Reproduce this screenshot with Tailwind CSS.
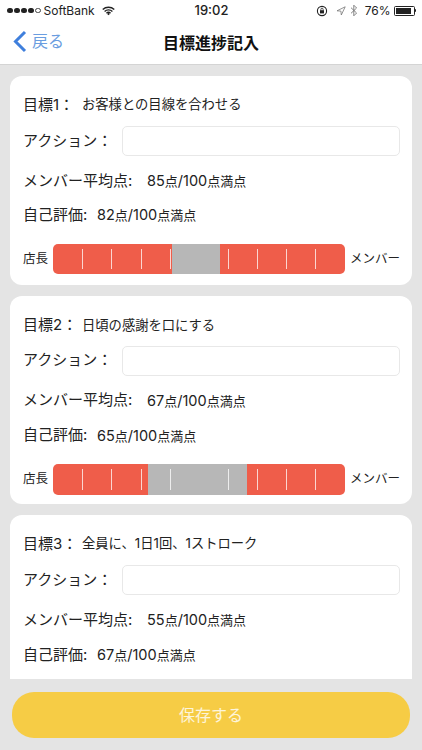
<!doctype html>
<html lang="ja">
<head>
<meta charset="UTF-8" />
<meta name="viewport" content="width=device-width, initial-scale=1" />
<title>目標進捗記入</title>
<script src="https://cdn.jsdelivr.net/npm/@tailwindcss/browser@4"></script>
</head>
<body class="relative h-[750px] w-[422px] overflow-hidden bg-[#e4e4e4] text-[#222] font-['Inter','Noto_Sans_CJK_JP',sans-serif]">
  <!-- status bar -->
  <div class="flex h-[21px] items-center justify-between bg-white pl-[7px] pr-[6px] text-[12px] text-[#222]">
    <div class="flex w-[150px] items-center">
      <div class="flex gap-[1.5px]">
        <span class="size-[5.5px] rounded-full bg-[#222]"></span>
        <span class="size-[5.5px] rounded-full bg-[#222]"></span>
        <span class="size-[5.5px] rounded-full bg-[#222]"></span>
        <span class="size-[5.5px] rounded-full bg-[#222]"></span>
        <span class="size-[5.5px] rounded-full border border-[#444]"></span>
      </div>
      <span class="ml-[3px]">SoftBank</span>
      <svg class="ml-[7px]" width="13" height="10" viewBox="0 0 14 10" fill="none" stroke="#222" stroke-width="1.5"><path d="M.8 3.4a9 9 0 0 1 12.4 0M2.8 5.5a6.1 6.1 0 0 1 8.4 0M4.8 7.4a3.2 3.2 0 0 1 4.4 0"/><path d="M5.6 8.2 7 6.9l1.4 1.3L7 9.7z" fill="#222" stroke="none"/></svg>
    </div>
    <span class="text-[13px] font-medium">19:02</span>
    <div class="flex w-[150px] items-center justify-end">
      <svg width="12" height="12" viewBox="0 0 12 12" fill="none" stroke="#222"><circle cx="6" cy="6" r="4.6" stroke-width="1.1"/><rect x="4" y="5.2" width="4" height="3.2" fill="#222" stroke="none"/><path d="M4.9 5.2V4.3a1.1 1.1 0 0 1 2.2 0v.9" stroke-width=".8"/></svg>
      <svg class="ml-[8px]" width="10" height="10" viewBox="0 0 10 10" fill="none" stroke="#777" stroke-width=".8"><path d="M9.2.8 1 4.8l3.9.3.4 3.9z"/></svg>
      <svg class="ml-[4px]" width="8" height="13" viewBox="0 0 8 13" fill="none" stroke="#777" stroke-width=".9"><path d="M1 3.7 6.6 9 3.8 11.8V1.2L6.6 4 1 9.3"/></svg>
      <span class="ml-[7px]">76%</span>
      <div class="ml-[3px] flex h-[10px] w-[21px] items-stretch rounded-[1.5px] border border-[#222] p-[1px]"><div class="w-[15px] bg-[#222]"></div></div>
      <div class="h-[3px] w-[1.5px] rounded-r-full bg-[#222]"></div>
    </div>
  </div>
  <!-- nav -->
  <div class="relative flex h-[44px] items-center justify-center border-b border-[#d4d4d4] bg-white">
    <div class="absolute left-[13px] top-[8px] flex items-center text-[#6a9de0]">
      <svg width="14" height="23" viewBox="0 0 14 23" fill="none" stroke="#3f7fdc" stroke-width="3"><path d="M12 2 2.5 11.5 12 21"/></svg>
      <span class="ml-[5px] text-[16px]">戻る</span>
    </div>
    <h1 class="text-[16px] font-bold text-[#111]">目標進捗記入</h1>
  </div>
  <!-- cards -->
  <div class="flex flex-col gap-[11px] px-[10px] pt-[11px]">
    <section class="h-[208.5px] shrink-0 rounded-[12px] bg-white pl-[13px] pr-[12px] pt-[17px]">
      <div class="flex h-[24px] items-center text-[15px]"><span class="w-[59px]">目標1：</span><span class="text-[13.3px]">お客様との目線を合わせる</span></div>
      <div class="mt-[9px] flex h-[30px] items-center text-[15px]"><span class="w-[99px]">アクション：</span><input type="text" aria-label="アクション" class="h-full flex-1 rounded-[5px] border border-[#e8e8e8] bg-white" /></div>
      <div class="mt-[13px] flex h-[24px] items-center text-[15px]"><span class="w-[124px]">メンバー平均点:</span><span class="text-[14.5px]">85<span class="text-[13px]">点</span>/100<span class="text-[13px]">点満点</span></span></div>
      <div class="mt-[10px] flex h-[24px] items-center text-[15px]"><span class="w-[74px]">自己評価:</span><span class="text-[14.5px]">82<span class="text-[13px]">点</span>/100<span class="text-[13px]">点満点</span></span></div>
      <div class="mt-[17px] flex h-[30px] items-center text-[12.5px]">
        <span class="w-[30px] shrink-0">店長</span>
        <div class="relative h-full w-[292px] shrink-0 overflow-hidden rounded-[5px] bg-[#ef5d4a]">
          <div class="absolute left-[119px] top-0 h-full w-[48px] bg-[#b7b7b7]"></div>
          <div class="absolute inset-y-[5px] left-0 right-0 flex">
            <i class="absolute left-[29px] h-full w-[1px] bg-white/75"></i>
            <i class="absolute left-[58px] h-full w-[1px] bg-white/75"></i>
            <i class="absolute left-[88px] h-full w-[1px] bg-white/75"></i>
            <i class="absolute left-[117px] h-full w-[1px] bg-white/75"></i>
            <i class="absolute left-[175px] h-full w-[1px] bg-white/75"></i>
            <i class="absolute left-[204px] h-full w-[1px] bg-white/75"></i>
            <i class="absolute left-[233px] h-full w-[1px] bg-white/75"></i>
            <i class="absolute left-[262px] h-full w-[1px] bg-white/75"></i>
          </div>
        </div>
        <span class="ml-[5px] whitespace-nowrap">メンバー</span>
      </div>
    </section>

    <section class="h-[208.5px] shrink-0 rounded-[12px] bg-white pl-[13px] pr-[12px] pt-[18px]">
      <div class="flex h-[24px] items-center text-[15px]"><span class="w-[59px]">目標2：</span><span class="text-[13.3px]">日頃の感謝を口にする</span></div>
      <div class="mt-[8px] flex h-[30px] items-center text-[15px]"><span class="w-[99px]">アクション：</span><input type="text" aria-label="アクション" class="h-full flex-1 rounded-[5px] border border-[#e8e8e8] bg-white" /></div>
      <div class="mt-[13px] flex h-[24px] items-center text-[15px]"><span class="w-[124px]">メンバー平均点:</span><span class="text-[14.5px]">67<span class="text-[13px]">点</span>/100<span class="text-[13px]">点満点</span></span></div>
      <div class="mt-[11px] flex h-[24px] items-center text-[15px]"><span class="w-[74px]">自己評価:</span><span class="text-[14.5px]">65<span class="text-[13px]">点</span>/100<span class="text-[13px]">点満点</span></span></div>
      <div class="mt-[16px] flex h-[31px] items-center text-[12.5px]">
        <span class="w-[30px] shrink-0">店長</span>
        <div class="relative h-full w-[292px] shrink-0 overflow-hidden rounded-[5px] bg-[#ef5d4a]">
          <div class="absolute left-[95px] top-0 h-full w-[99px] bg-[#b7b7b7]"></div>
          <div class="absolute inset-y-[5px] left-0 right-0 flex">
            <i class="absolute left-[29px] h-full w-[1px] bg-white/75"></i>
            <i class="absolute left-[58px] h-full w-[1px] bg-white/75"></i>
            <i class="absolute left-[88px] h-full w-[1px] bg-white/75"></i>
            <i class="absolute left-[117px] h-full w-[1px] bg-white/75"></i>
            <i class="absolute left-[175px] h-full w-[1px] bg-white/75"></i>
            <i class="absolute left-[204px] h-full w-[1px] bg-white/75"></i>
            <i class="absolute left-[233px] h-full w-[1px] bg-white/75"></i>
            <i class="absolute left-[262px] h-full w-[1px] bg-white/75"></i>
          </div>
        </div>
        <span class="ml-[5px] whitespace-nowrap">メンバー</span>
      </div>
    </section>

    <section class="h-[208.5px] shrink-0 rounded-[12px] bg-white pl-[13px] pr-[12px] pt-[17px]">
      <div class="flex h-[24px] items-center text-[15px]"><span class="w-[59px]">目標3：</span><span class="text-[13.3px]">全員に、1日1回、1ストローク</span></div>
      <div class="mt-[9px] flex h-[30px] items-center text-[15px]"><span class="w-[99px]">アクション：</span><input type="text" aria-label="アクション" class="h-full flex-1 rounded-[5px] border border-[#e8e8e8] bg-white" /></div>
      <div class="mt-[13px] flex h-[24px] items-center text-[15px]"><span class="w-[124px]">メンバー平均点:</span><span class="text-[14.5px]">55<span class="text-[13px]">点</span>/100<span class="text-[13px]">点満点</span></span></div>
      <div class="mt-[11px] flex h-[24px] items-center text-[15px]"><span class="w-[74px]">自己評価:</span><span class="text-[14.5px]">67<span class="text-[13px]">点</span>/100<span class="text-[13px]">点満点</span></span></div>
    </section>
  </div>
  <!-- save button over the list -->
  <div class="absolute inset-x-0 bottom-0 h-[71px] bg-[#e4e4e4] px-[12px] pt-[13px]">
    <button class="h-[46px] w-[398px] rounded-[22px] bg-[#f6cc45] text-[16px] text-white/80">保存する</button>
  </div>
</body>
</html>
